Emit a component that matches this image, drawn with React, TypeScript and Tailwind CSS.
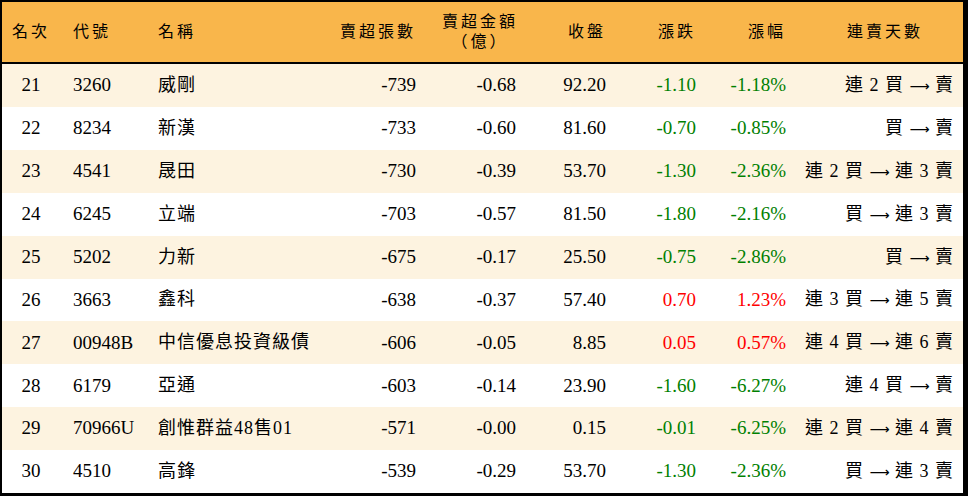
const rows = [
  { rank: 21, code: '3260', name: '威剛', qty: '-739', amt: '-0.68', close: '92.20', chg: '-1.10', pct: '-1.18%', days: '連 2 買 → 賣' },
  { rank: 22, code: '8234', name: '新漢', qty: '-733', amt: '-0.60', close: '81.60', chg: '-0.70', pct: '-0.85%', days: '買 → 賣' },
  { rank: 23, code: '4541', name: '晟田', qty: '-730', amt: '-0.39', close: '53.70', chg: '-1.30', pct: '-2.36%', days: '連 2 買 → 連 3 賣' },
  { rank: 24, code: '6245', name: '立端', qty: '-703', amt: '-0.57', close: '81.50', chg: '-1.80', pct: '-2.16%', days: '買 → 連 3 賣' },
  { rank: 25, code: '5202', name: '力新', qty: '-675', amt: '-0.17', close: '25.50', chg: '-0.75', pct: '-2.86%', days: '買 → 賣' },
  { rank: 26, code: '3663', name: '鑫科', qty: '-638', amt: '-0.37', close: '57.40', chg: '0.70', pct: '1.23%', days: '連 3 買 → 連 5 賣' },
  { rank: 27, code: '00948B', name: '中信優息投資級債', qty: '-606', amt: '-0.05', close: '8.85', chg: '0.05', pct: '0.57%', days: '連 4 買 → 連 6 賣' },
  { rank: 28, code: '6179', name: '亞通', qty: '-603', amt: '-0.14', close: '23.90', chg: '-1.60', pct: '-6.27%', days: '連 4 買 → 賣' },
  { rank: 29, code: '70966U', name: '創惟群益48售01', qty: '-571', amt: '-0.00', close: '0.15', chg: '-0.01', pct: '-6.25%', days: '連 2 買 → 連 4 賣' },
  { rank: 30, code: '4510', name: '高鋒', qty: '-539', amt: '-0.29', close: '53.70', chg: '-1.30', pct: '-2.36%', days: '買 → 連 3 賣' },
]

// split "連 2 買 → 賣" so the arrow can use a font with a long arrow glyph
function Days({ text }: { text: string }) {
  const [left, right] = text.split(' → ')
  return (
    <span className="whitespace-pre">
      {left}
      {' '}
      <span className="font-['DejaVu_Sans'] text-[14px] tracking-normal">⟶</span>
      {' '}
      {right}
    </span>
  )
}

export default function App() {
  return (
    <div
      className="w-[968px] h-[496px] bg-black pt-[2px] pl-[2px] pr-[5px] pb-[3px] flex flex-col text-black"
      style={{ fontFamily: '"Liberation Serif", "Noto Sans CJK TC", serif' }}
    >
      {/* Header */}
      <div className="h-[60px] bg-[#f9b64b] flex items-center text-[16px] tracking-[3px] leading-[20px] border-b-2 border-black box-content">
        <div className="w-[58px] text-center">名次</div>
        <div className="w-[85px] pl-[13px]">代號</div>
        <div className="w-[185px] pl-[13px]">名稱</div>
        <div className="w-[96px] pr-[10px] text-right">賣超張數</div>
        <div className="w-[100px] pr-[8px] flex justify-end">
          <div className="text-center">
            <div>賣超金額</div>
            <div>（億）</div>
          </div>
        </div>
        <div className="w-[90px] pr-[10px] text-right">收盤</div>
        <div className="w-[90px] pr-[10px] text-right">漲跌</div>
        <div className="w-[90px] pr-[10px] text-right">漲幅</div>
        <div className="flex-1 pr-[40px] text-right">連賣天數</div>
      </div>

      {/* Rows */}
      <div className="flex-1 flex flex-col">
        {rows.map((r, i) => {
          const up = !r.chg.startsWith('-')
          const color = up ? 'text-[#ff0000]' : 'text-[#008000]'
          return (
            <div
              key={r.rank}
              className={`flex-1 flex items-center text-[19px] ${i % 2 === 0 ? 'bg-[#fdf3e0]' : 'bg-white'}`}
            >
              <div className="w-[58px] text-center">{r.rank}</div>
              <div className="w-[85px] pl-[13px]">{r.code}</div>
              <div className="w-[185px] pl-[13px] tracking-[1px] text-[18px]">{r.name}</div>
              <div className="w-[96px] pr-[10px] text-right">{r.qty}</div>
              <div className="w-[100px] pr-[10px] text-right">{r.amt}</div>
              <div className="w-[90px] pr-[10px] text-right">{r.close}</div>
              <div className={`w-[90px] pr-[10px] text-right ${color}`}>{r.chg}</div>
              <div className={`w-[90px] pr-[10px] text-right ${color}`}>{r.pct}</div>
              <div className="flex-1 pr-[9px] text-right text-[18px] tracking-[1px]">
                <Days text={r.days} />
              </div>
            </div>
          )
        })}
      </div>
    </div>
  )
}
